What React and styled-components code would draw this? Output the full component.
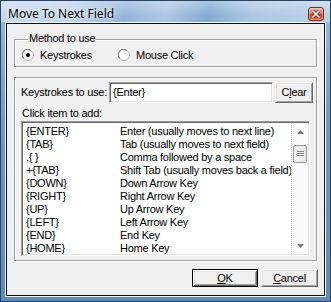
import React from "react";
import styled, { createGlobalStyle } from "styled-components";

const Global = createGlobalStyle`
  html, body { margin: 0; padding: 0; background: #fff; }
  body { font-family: "Liberation Sans", Arial, sans-serif; }
  * { box-sizing: border-box; }
`;

const Window = styled.div`
  width: 331px;
  height: 302px;
  border: 1px solid #2a4563;
  background: linear-gradient(180deg, #9dbcdc 0%, #7099c4 40%, #5f8bb8 100%);
  padding: 0 4px 4px 4px;
  display: flex;
  flex-direction: column;
`;

const TitleBar = styled.div`
  height: 21px;
  margin: 0 -4px;
  padding: 6px 6px 0 7px;
  display: flex;
  align-items: flex-start;
  justify-content: space-between;
  background:
    linear-gradient(180deg, rgba(255,255,255,0.35) 0%, rgba(255,255,255,0.05) 70%),
    linear-gradient(100deg, #c2d7ed 0%, #bcd3eb 22%, #8db1d7 38%, #a9c5e2 50%, #7ea6cf 63%, #a8c4e2 76%, #b7cfe8 100%);
`;

const TitleText = styled.div`
  font-family: "Noto Sans", "Open Sans", sans-serif;
  font-size: 12px;
  line-height: 14px;
  color: #000;
  text-shadow: 0 0 6px rgba(255,255,255,0.9), 0 0 3px rgba(255,255,255,0.8);
`;

const CloseButton = styled.div`
  width: 16px;
  height: 14px;
  border: 1px solid #7a2b1c;
  border-radius: 3px;
  background: linear-gradient(180deg, #eab2a0 0%, #d77a5e 45%, #c0442a 55%, #d9704f 100%);
  display: flex;
  align-items: center;
  justify-content: center;
  box-shadow: inset 0 0 0 1px rgba(255,255,255,0.35);
`;

const ClientFrame = styled.div`
  flex: 1;
  border: 1px solid #f4f7fb;
  display: flex;
`;

const Client = styled.div`
  flex: 1;
  border: 1px solid #101010;
  background: #f0f0f0;
  padding: 8px 7px 0 7px;
  display: flex;
  flex-direction: column;
  font-size: 11px;
  letter-spacing: -0.25px;
  color: #000;
`;

const Group = styled.fieldset`
  margin: ${(p) => p.$mt || 0}px 0 0 0;
  padding: ${(p) => p.$pad};
  border: 1px solid #a0a0a0;
  box-shadow: inset 1px 1px #fff, 1px 1px #fff;
  min-width: 0;
  height: ${(p) => (p.$h ? `${p.$h}px` : "auto")};
`;

const Legend = styled.legend`
  margin-left: 6px;
  padding: 0 1px 2px 1px;
  line-height: 13px;
  background: #f0f0f0;
`;

const RadioRow = styled.div`
  display: flex;
  height: 14px;
  align-items: center;
`;

const RadioOption = styled.label`
  display: flex;
  align-items: center;
  gap: 6px;
  width: ${(p) => (p.$w ? `${p.$w}px` : "auto")};
  line-height: 14px;
`;

const InputRow = styled.div`
  display: flex;
  align-items: center;
  gap: 2px;
  padding: 0 3px 0 6px;
`;

const FieldLabel = styled.div`
  flex: 1;
  line-height: 13px;
`;

const TextBox = styled.div`
  width: 164px;
  height: 21px;
  background: #fff;
  border: 1px solid;
  border-color: #a0a0a0 #fff #fff #a0a0a0;
  box-shadow: inset 1px 1px #696969, inset -1px -1px #e3e3e3;
  padding: 0 3px;
  display: flex;
  align-items: center;
  line-height: 13px;
`;

const Button = styled.div`
  width: ${(p) => p.$w}px;
  height: ${(p) => p.$h}px;
  background: #f0f0f0;
  display: flex;
  align-items: center;
  justify-content: center;
  line-height: 13px;
  border: 1px solid;
  border-color: ${(p) => (p.$default ? "#000" : "#fff #696969 #696969 #fff")};
  box-shadow: ${(p) =>
    p.$default
      ? "inset 1px 1px #fff, inset -1px -1px #696969, inset 2px 2px #e3e3e3, inset -2px -2px #a0a0a0"
      : "inset 1px 1px #e3e3e3, inset -1px -1px #a0a0a0"};
  u { text-decoration: underline; text-underline-offset: 1px; }
`;

const SubLabel = styled.div`
  margin: 3px 0 1px 7px;
  line-height: 14px;
`;

const ListBox = styled.div`
  margin-left: 6px;
  width: 289px;
  height: 135px;
  background: #fff;
  border: 1px solid;
  border-color: #a0a0a0 #fff #fff #a0a0a0;
  box-shadow: inset 1px 1px #696969, inset -1px -1px #e3e3e3;
  padding: 1px;
  display: flex;
  overflow: hidden;
`;

const Rows = styled.div`
  flex: 1;
  padding: 2px 0 0 3px;
  overflow: hidden;
  white-space: nowrap;
`;

const Row = styled.div`
  display: flex;
  height: 13px;
  padding-top: 1px;
  line-height: 11px;
`;

const KeyCell = styled.div`
  width: 94px;
  flex: 0 0 94px;
`;

const DescCell = styled.div`
  flex: 0 0 auto;
`;

const ScrollBar = styled.div`
  width: 17px;
  flex: 0 0 17px;
  background: #fafafa;
  border-left: 1px dotted #cfcfcf;
  display: flex;
  flex-direction: column;
  align-items: center;
`;

const ArrowBox = styled.div`
  height: 17px;
  width: 100%;
  display: flex;
  align-items: center;
  justify-content: center;
`;

const Track = styled.div`
  flex: 1;
  width: 100%;
  padding: 5px 1px 0 1px;
`;

const Thumb = styled.div`
  height: 18px;
  border: 1px solid #9a9a9a;
  border-radius: 2px;
  background: linear-gradient(90deg, #f4f4f4 0%, #e8e8e8 100%);
  display: flex;
  align-items: center;
  justify-content: center;
`;

const ButtonRow = styled.div`
  display: flex;
  justify-content: flex-end;
  gap: 3px;
  margin-top: 8px;
  padding-right: 6px;
  margin-right: -7px;
`;

const RadioIcon = ({ checked }) => (
  <svg width="12" height="12" viewBox="0 0 12 12">
    <circle cx="6" cy="6" r="5.5" fill="#fff" stroke="#b0b0b0" />
    <path d="M1.8 9.2 A5 5 0 0 1 9.2 1.8" fill="none" stroke="#7a7a7a" />
    {checked && <circle cx="6" cy="6" r="2" fill="#000" />}
  </svg>
);

const items = [
  ["{ENTER}", "Enter (usually moves to next line)"],
  ["{TAB}", "Tab (usually moves to next field)"],
  [",{ }", "Comma followed by a space"],
  ["+{TAB}", "Shift Tab (usually moves back a field)"],
  ["{DOWN}", "Down Arrow Key"],
  ["{RIGHT}", "Right Arrow Key"],
  ["{UP}", "Up Arrow Key"],
  ["{LEFT}", "Left Arrow Key"],
  ["{END}", "End Key"],
  ["{HOME}", "Home Key"],
];

export default function App() {
  return (
    <>
      <Global />
      <Window>
        <TitleBar>
          <TitleText>Move To Next Field</TitleText>
          <CloseButton>
            <svg width="8" height="8" viewBox="0 0 8 8">
              <path d="M1 1 L7 7 M7 1 L1 7" stroke="#5a1a10" strokeWidth="3" strokeLinecap="square" />
              <path d="M1 1 L7 7 M7 1 L1 7" stroke="#fff" strokeWidth="1.6" strokeLinecap="square" />
            </svg>
          </CloseButton>
        </TitleBar>
        <ClientFrame>
          <Client>
            <Group $pad="1px 8px 4px 7px">
              <Legend>Method to use</Legend>
              <RadioRow>
                <RadioOption $w={96}>
                  <RadioIcon checked />
                  Keystrokes
                </RadioOption>
                <RadioOption>
                  <RadioIcon />
                  Mouse Click
                </RadioOption>
              </RadioRow>
            </Group>
            <Group $mt={10} $pad="4px 0 0 0" $h={184}>
              <InputRow>
                <FieldLabel>Keystrokes to use:</FieldLabel>
                <TextBox>{"{Enter}"}</TextBox>
                <Button $w={38} $h={21}>
                  <span>
                    C<u>l</u>ear
                  </span>
                </Button>
              </InputRow>
              <SubLabel>Click item to add:</SubLabel>
              <ListBox>
                <Rows>
                  {items.map(([k, d]) => (
                    <Row key={k}>
                      <KeyCell>{k}</KeyCell>
                      <DescCell>{d}</DescCell>
                    </Row>
                  ))}
                </Rows>
                <ScrollBar>
                  <ArrowBox>
                    <svg width="7" height="4" viewBox="0 0 7 4">
                      <path d="M0 4 L3.5 0 L7 4 Z" fill="#7a7a7a" />
                    </svg>
                  </ArrowBox>
                  <Track>
                    <Thumb>
                      <svg width="7" height="6" viewBox="0 0 7 6">
                        <path d="M0 0.5 H7 M0 2.5 H7 M0 4.5 H7" stroke="#8a8a8a" strokeWidth="1" />
                      </svg>
                    </Thumb>
                  </Track>
                  <ArrowBox>
                    <svg width="7" height="4" viewBox="0 0 7 4">
                      <path d="M0 0 L7 0 L3.5 4 Z" fill="#7a7a7a" />
                    </svg>
                  </ArrowBox>
                </ScrollBar>
              </ListBox>
            </Group>
            <ButtonRow>
              <Button $w={66} $h={18} $default>
                <span>
                  <u>O</u>K
                </span>
              </Button>
              <Button $w={57} $h={18}>
                <span>
                  <u>C</u>ancel
                </span>
              </Button>
            </ButtonRow>
          </Client>
        </ClientFrame>
      </Window>
    </>
  );
}
